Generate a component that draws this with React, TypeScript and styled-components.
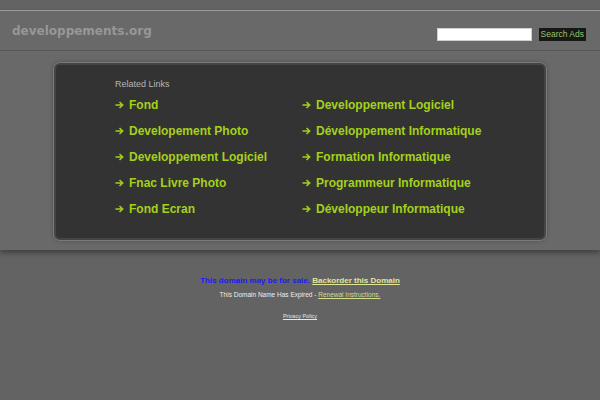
import React from "react";
import styled, { createGlobalStyle } from "styled-components";

const GlobalStyle = createGlobalStyle`
  html, body {
    margin: 0;
    padding: 0;
    background-color: #636363;
    font-family: "Liberation Sans", Arial, sans-serif;
  }
`;

const Page = styled.div`
  width: 600px;
  min-height: 400px;
  padding-top: 10px;
`;

const TopBand = styled.div`
  border-top: 1px solid #9a9a9a;
  background-color: #696969;
  box-shadow: 0 3px 5px rgba(0, 0, 0, 0.35);
`;

const Header = styled.div`
  height: 39px;
  display: flex;
  align-items: center;
  justify-content: space-between;
  padding: 0 14px 0 12px;
  border-bottom: 1px solid #575757;
`;

const SiteTitle = styled.div`
  font-family: "DejaVu Sans", Verdana, sans-serif;
  font-size: 12px;
  font-weight: 700;
  color: #979797;
`;

const SearchForm = styled.div`
  display: flex;
  align-items: center;
  gap: 7px;
  margin-top: 8px;
`;

const SearchInput = styled.div`
  width: 93px;
  height: 11px;
  background-color: #ffffff;
  border: 1px solid #cfcfcf;
`;

const SearchButton = styled.div`
  background-color: #151815;
  color: #9dc26a;
  font-size: 8.5px;
  height: 13px;
  line-height: 13px;
  padding: 0 2px;
`;

const PanelArea = styled.div`
  padding: 12px 54px 10px 54px;
`;

const Panel = styled.div`
  background-color: #333333;
  border: 2px solid #454545;
  outline: 1px solid #7a7a7a;
  border-radius: 6px;
  box-shadow: 0 0 4px rgba(0, 0, 0, 0.4);
  height: 177px;
  padding: 14px 0 0 59px;
  box-sizing: border-box;
`;

const LinksTitle = styled.div`
  font-size: 9px;
  color: #b4b4b4;
  margin-bottom: 3px;
`;

const LinksGrid = styled.div`
  display: grid;
  grid-template-columns: 187px auto;
  grid-auto-rows: 26px;
`;

const LinkItem = styled.div`
  display: flex;
  align-items: center;
  gap: 5px;
  color: #a4d11b;
  font-size: 12px;
  font-weight: 700;
`;

const ArrowIcon = styled.svg`
  flex: none;
  width: 9px;
  height: 8px;
`;

const Footer = styled.div`
  display: flex;
  flex-direction: column;
  align-items: center;
  padding-top: 26px;
`;

const SaleLine = styled.div`
  font-size: 8px;
  font-weight: 700;
  color: #1c1cf0;
`;

const BackorderLink = styled.span`
  color: #e1e59a;
  text-decoration: underline;
`;

const ExpiredLine = styled.div`
  font-size: 6.5px;
  color: #eeeeee;
  margin-top: 6px;
`;

const SmallLink = styled.span<{ $light?: boolean }>`
  color: ${(p) => (p.$light ? "#e6e6e6" : "#d4dc8c")};
  text-decoration: underline;
`;

const PrivacyLine = styled.div`
  font-size: 5.5px;
  margin-top: 15px;
`;

const leftLinks = [
  "Fond",
  "Developement Photo",
  "Developpement Logiciel",
  "Fnac Livre Photo",
  "Fond Ecran",
];

const rightLinks = [
  "Developpement Logiciel",
  "Développement Informatique",
  "Formation Informatique",
  "Programmeur Informatique",
  "Développeur Informatique",
];

const Arrow = () => (
  <ArrowIcon viewBox="0 0 9 8">
    <path
      d="M0.5 4 H7.5 M4.5 1 L7.7 4 L4.5 7"
      fill="none"
      stroke="#a4d11b"
      strokeWidth="1.5"
    />
  </ArrowIcon>
);

export default function App() {
  const items: string[] = [];
  leftLinks.forEach((l, i) => {
    items.push(l);
    items.push(rightLinks[i]);
  });

  return (
    <Page>
      <GlobalStyle />
      <TopBand>
        <Header>
          <SiteTitle>developpements.org</SiteTitle>
          <SearchForm>
            <SearchInput />
            <SearchButton>Search Ads</SearchButton>
          </SearchForm>
        </Header>
        <PanelArea>
          <Panel>
            <LinksTitle>Related Links</LinksTitle>
            <LinksGrid>
              {items.map((label, i) => (
                <LinkItem key={i}>
                  <Arrow />
                  {label}
                </LinkItem>
              ))}
            </LinksGrid>
          </Panel>
        </PanelArea>
      </TopBand>
      <Footer>
        <SaleLine>
          This domain may be for sale. <BackorderLink>Backorder this Domain</BackorderLink>
        </SaleLine>
        <ExpiredLine>
          This Domain Name Has Expired - <SmallLink>Renewal Instructions.</SmallLink>
        </ExpiredLine>
        <PrivacyLine>
          <SmallLink $light>Privacy Policy</SmallLink>
        </PrivacyLine>
      </Footer>
    </Page>
  );
}
